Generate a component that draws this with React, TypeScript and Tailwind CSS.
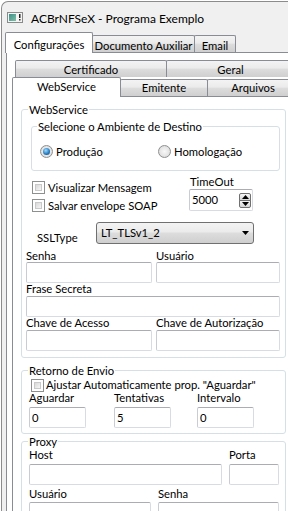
import React from "react";

const tabGrad =
  "bg-[linear-gradient(180deg,#f3f3f3_0%,#ebebeb_45%,#dddddd_50%,#cfcfcf_100%)]";

function AppIcon() {
  return (
    <svg width="16" height="11" viewBox="0 0 16 11" className="shrink-0">
      <defs>
        <linearGradient id="ig" x1="0" y1="0" x2="1" y2="1">
          <stop offset="0" stopColor="#3d8f8a" />
          <stop offset="1" stopColor="#7fc0a6" />
        </linearGradient>
      </defs>
      <rect x="0.5" y="0.5" width="15" height="10" fill="#f4f4f4" stroke="#8a8a8a" />
      <rect x="2" y="2" width="7" height="7" fill="url(#ig)" />
      <rect x="12" y="2" width="1.5" height="4" fill="#222" />
      <rect x="12" y="7" width="1.5" height="1.5" fill="#222" />
    </svg>
  );
}

function Check() {
  return (
    <span className="w-[13px] h-[13px] shrink-0 border border-[#8e8f8f] bg-white p-[2px] flex">
      <span className="flex-1 border border-[#c9c9c9] bg-[linear-gradient(135deg,#d8d8d8_0%,#f6f6f6_100%)]" />
    </span>
  );
}

function Radio({ checked }: { checked?: boolean }) {
  return (
    <span className="w-[13px] h-[13px] shrink-0 rounded-full border border-[#8e8f8f] bg-[radial-gradient(circle_at_50%_50%,#f8f8f8_0%,#e4e4e4_60%,#cfcfcf_100%)] flex items-center justify-center">
      {checked && (
        <span className="w-[7px] h-[7px] rounded-full bg-[radial-gradient(circle_at_40%_35%,#9fdcff_0%,#2a7fc4_55%,#0c3c6e_100%)]" />
      )}
    </span>
  );
}

function Lbl({ children, className = "" }: { children?: React.ReactNode; className?: string }) {
  return <div className={`h-[12px] leading-[12px] whitespace-nowrap ${className}`}>{children}</div>;
}

function Edit({ className = "", value }: { className?: string; value?: string }) {
  return (
    <div
      className={`h-[21px] shrink-0 bg-white border border-[#d8dce2] border-t-[#abadb3] border-l-[#c9ccd2] rounded-[2px] flex items-center pl-[2px] leading-none ${className}`}
    >
      {value}
    </div>
  );
}

function Arrow({ up }: { up?: boolean }) {
  return (
    <svg width="7" height="4" viewBox="0 0 7 4">
      {up ? <path d="M0 4 L3.5 0 L7 4 Z" fill="#000" /> : <path d="M0 0 L7 0 L3.5 4 Z" fill="#000" />}
    </svg>
  );
}

export default function App() {
  return (
    <div className="w-[288px] h-[511px] overflow-hidden bg-white font-['Lato','Noto_Sans',sans-serif] text-[11.25px] text-black">
      <div className="ml-[1px] mt-[1px] h-[510px] w-[310px] rounded-tl-[7px] border-l border-t border-[#8c8c8c] bg-[#f0f0f0] flex flex-col">
        {/* title bar */}
        <div className="h-[30px] shrink-0 flex items-center pl-[5px]">
          <AppIcon />
          <span className="ml-[8px] text-[12px] leading-[15px] mt-[2px]">ACBrNFSeX - Programa Exemplo</span>
        </div>

        {/* outer tab control */}
        <div className="pl-[4px] flex flex-col flex-1">
          <div className="h-[20px] flex items-end shrink-0">
            <div className="relative z-10 -ml-[1px] -mb-[1px] w-[88px] h-[21px] bg-white border border-b-0 border-[#898c95] rounded-t-[2px] flex justify-center pt-[4px] leading-[15px]">
              Configurações
            </div>
            <div className={`-ml-[1px] w-[103px] h-[17px] border border-b-0 border-[#898c95] rounded-t-[2px] ${tabGrad} flex justify-center pt-[2px] leading-[15px]`}>
              Documento Auxiliar
            </div>
            <div className={`-ml-[1px] w-[42px] h-[17px] border border-b-0 border-[#898c95] rounded-t-[2px] ${tabGrad} flex justify-center pt-[2px] leading-[15px]`}>
              Email
            </div>
          </div>

          {/* outer page */}
          <div className="flex-1 border-t border-l border-[#898c95] bg-white pl-[5px] pt-[7px] flex flex-col">
            {/* inner tabs row 1 */}
            <div className="h-[17px] flex shrink-0 ml-[3px]">
              <div className={`w-[152px] h-[17px] border border-b-0 border-[#898c95] rounded-t-[2px] ${tabGrad} flex justify-center pt-[1px] leading-[15px]`}>
                Certificado
              </div>
              <div className={`-ml-[1px] w-[129px] h-[17px] border border-b-0 border-[#898c95] rounded-t-[2px] ${tabGrad} flex justify-center pt-[1px] leading-[15px]`}>
                Geral
              </div>
            </div>
            {/* inner tabs row 2 */}
            <div className="h-[19px] flex items-end shrink-0">
              <div className="relative z-10 -mb-[1px] w-[109px] h-[20px] bg-white border border-b-0 border-[#898c95] rounded-t-[2px] flex justify-center pt-[1px] leading-[15px]">
                WebService
              </div>
              <div className={`-ml-[1px] w-[88px] h-[17px] border border-b-0 border-[#898c95] rounded-t-[2px] ${tabGrad} flex justify-center pt-[0px] leading-[15px]`}>
                Emitente
              </div>
              <div className={`-ml-[1px] w-[92px] h-[17px] border border-b-0 border-[#898c95] rounded-t-[2px] ${tabGrad} flex justify-center pt-[0px] leading-[15px]`}>
                Arquivos
              </div>
            </div>

            {/* inner page */}
            <div className="flex-1 border-t border-l border-[#898c95] bg-white pl-[8px] flex flex-col">
              {/* WebService group */}
              <fieldset className="mt-[5px] w-[265px] border border-[#d5dfe5] rounded-[3px] p-0">
                <legend className="ml-[6px] px-[1px] leading-[15px]">WebService</legend>
                <div className="pl-[4px] pr-[5px] pb-[6px] flex flex-col">
                  <fieldset className="ml-[5px] mt-[2px] w-[249px] border border-[#d5dfe5] rounded-[3px] p-0">
                    <legend className="ml-[5px] px-[1px] leading-[15px]">Selecione o Ambiente de Destino</legend>
                    <div className="mt-[10px] mb-[11px] pl-[8px] h-[15px] flex items-center">
                      <div className="w-[118px] flex items-center">
                        <Radio checked />
                        <span className="ml-[3px] leading-[15px]">Produção</span>
                      </div>
                      <div className="flex items-center">
                        <Radio />
                        <span className="ml-[3px] leading-[15px]">Homologação</span>
                      </div>
                    </div>
                  </fieldset>

                  <div className="mt-[3px] flex">
                    <div className="w-[163px] pl-[6px] pt-[6px] flex flex-col gap-[3px]">
                      <div className="h-[15px] flex items-center">
                        <Check />
                        <span className="ml-[3px] leading-[15px]">Visualizar Mensagem</span>
                      </div>
                      <div className="h-[15px] flex items-center">
                        <Check />
                        <span className="ml-[3px] leading-[15px]">Salvar envelope SOAP</span>
                      </div>
                    </div>
                    <div className="flex flex-col">
                      <div className="h-[15px] leading-[15px] pl-[1px]">TimeOut</div>
                      <div className="w-[64px] h-[22px] bg-white border border-[#d8dce2] border-t-[#abadb3] border-l-[#c9ccd2] rounded-[2px] flex items-center pl-[2px] pr-[1px]">
                        <span className="flex-1 leading-none">5000</span>
                        <div className="flex flex-col">
                          <div className="w-[12px] h-[8px] border border-[#707070] rounded-t-[2px] bg-[linear-gradient(180deg,#f6f6f6,#d4d4d4)] flex items-center justify-center">
                            <Arrow up />
                          </div>
                          <div className="-mt-[1px] w-[12px] h-[8px] border border-[#707070] rounded-b-[2px] bg-[linear-gradient(180deg,#f6f6f6,#d4d4d4)] flex items-center justify-center">
                            <Arrow />
                          </div>
                        </div>
                      </div>
                    </div>
                  </div>

                  <div className="mt-[9px] flex items-start">
                    <div className="w-[70px] pl-[11px] mt-[8px] leading-[15px]">SSLType</div>
                    <div className={`w-[158px] h-[22px] border border-[#707070] rounded-[3px] ${tabGrad} flex items-center pl-[4px] pr-[4px]`}>
                      <span className="flex-1 leading-none">LT_TLSv1_2</span>
                      <Arrow />
                    </div>
                  </div>

                  <div className="mt-[5px] flex gap-[4px]">
                    <div className="w-[126px] flex flex-col">
                      <Lbl>Senha</Lbl>
                      <Edit className="w-[126px]" />
                    </div>
                    <div className="w-[124px] flex flex-col">
                      <Lbl>Usuário</Lbl>
                      <Edit className="w-[124px]" />
                    </div>
                  </div>

                  <Lbl className="mt-0">Frase Secreta</Lbl>
                  <Edit className="mt-[1px] w-[254px]" />

                  <div className="flex gap-[4px]">
                    <div className="w-[126px] flex flex-col">
                      <Lbl>Chave de Acesso</Lbl>
                      <Edit className="mt-[1px] w-[126px]" />
                    </div>
                    <div className="w-[124px] flex flex-col">
                      <Lbl>Chave de Autorização</Lbl>
                      <Edit className="mt-[1px] w-[124px]" />
                    </div>
                  </div>
                </div>
              </fieldset>

              {/* Retorno de Envio */}
              <fieldset className="mt-[5px] w-[265px] border border-[#d5dfe5] rounded-[3px] p-0">
                <legend className="ml-[6px] px-[1px] leading-[15px]">Retorno de Envio</legend>
                <div className="pl-[7px] pb-[5px] flex flex-col">
                  <div className="h-[14px] ml-[2px] flex items-center">
                    <Check />
                    <span className="ml-[2px] leading-[14px]">Ajustar Automaticamente prop. "Aguardar"</span>
                  </div>
                  <div className="flex">
                    <div className="w-[85px] flex flex-col">
                      <Lbl>Aguardar</Lbl>
                      <Edit className="mt-[3px] w-[57px]" value="0" />
                    </div>
                    <div className="w-[83px] flex flex-col">
                      <Lbl>Tentativas</Lbl>
                      <Edit className="mt-[3px] w-[57px]" value="5" />
                    </div>
                    <div className="w-[57px] flex flex-col">
                      <Lbl>Intervalo</Lbl>
                      <Edit className="mt-[3px] w-[57px]" value="0" />
                    </div>
                  </div>
                </div>
              </fieldset>

              {/* Proxy */}
              <fieldset className="mt-0 w-[265px] border border-[#d5dfe5] rounded-[3px] p-0">
                <legend className="ml-[6px] px-[1px] leading-[15px]">Proxy</legend>
                <div className="pl-[7px] pb-[5px] flex flex-col">
                  <div className="flex gap-[7px]">
                    <div className="w-[193px] flex flex-col">
                      <Lbl>Host</Lbl>
                      <Edit className="mt-[3px] w-[193px]" />
                    </div>
                    <div className="w-[50px] flex flex-col">
                      <Lbl>Porta</Lbl>
                      <Edit className="mt-[3px] w-[50px]" />
                    </div>
                  </div>
                  <div className="mt-[3px] flex gap-[7px]">
                    <div className="w-[122px] flex flex-col">
                      <Lbl>Usuário</Lbl>
                      <Edit className="mt-[2px] w-[122px]" />
                    </div>
                    <div className="w-[121px] flex flex-col">
                      <Lbl>Senha</Lbl>
                      <Edit className="mt-[2px] w-[121px]" />
                    </div>
                  </div>
                </div>
              </fieldset>
            </div>
          </div>
        </div>
      </div>
    </div>
  );
}
